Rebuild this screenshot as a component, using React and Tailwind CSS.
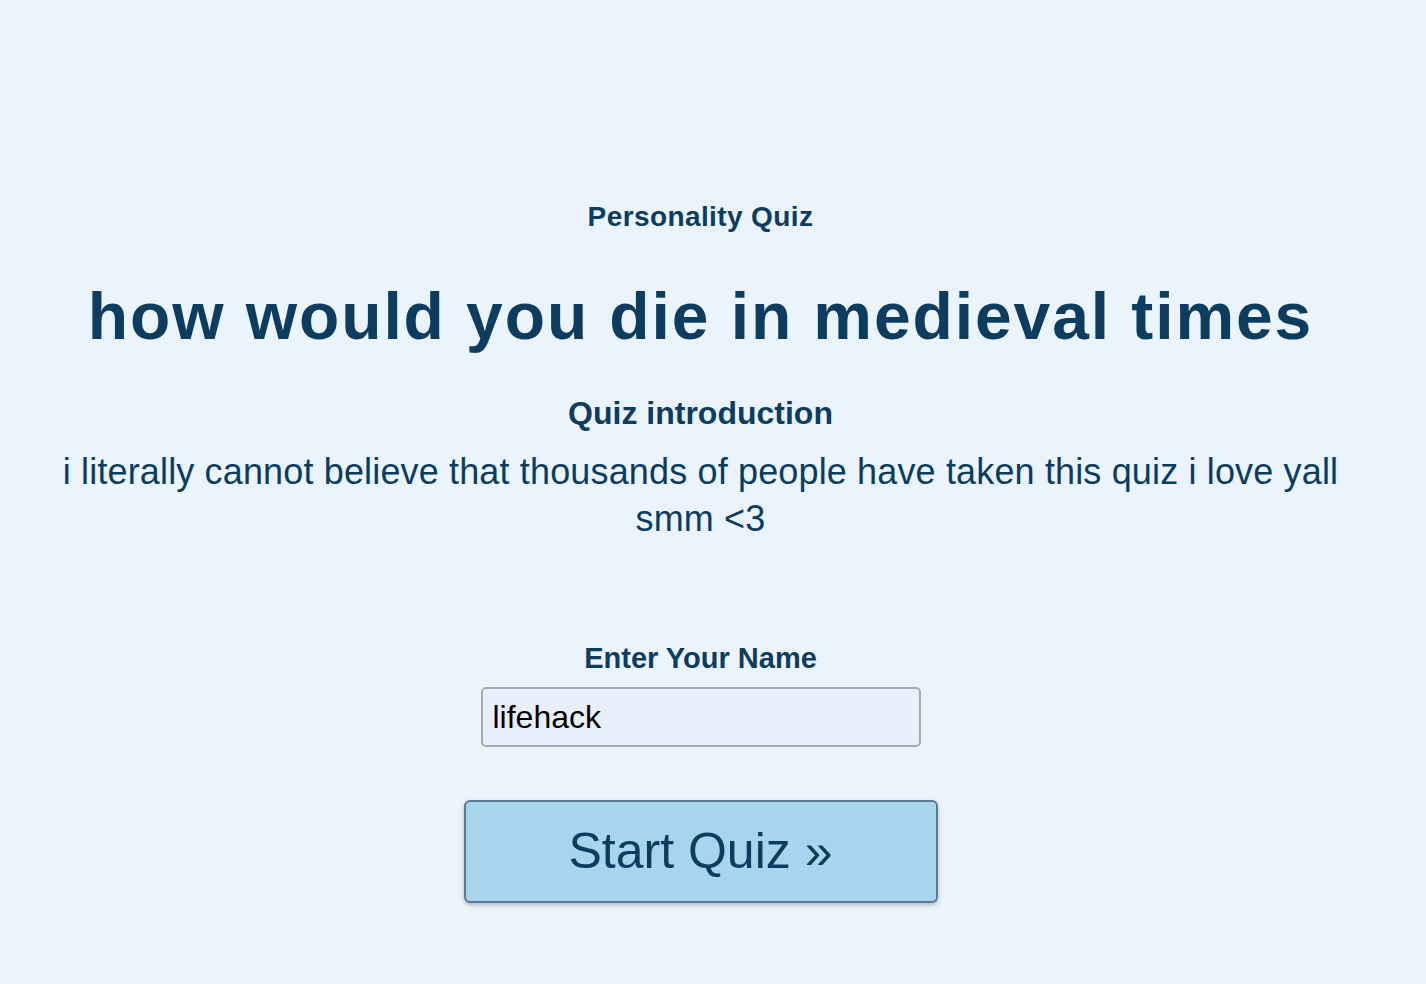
import React, { useState } from 'react';

export default function App() {
  const [name, setName] = useState('lifehack');

  return (
    <div
      className="min-h-screen bg-[#ebf4fc] text-[#0c3c5e] flex flex-col items-center text-center pt-[201px] pr-[25px]"
      style={{ fontFamily: '"Liberation Sans", Arial, sans-serif' }}
    >
      <h2 className="text-[28px] font-bold leading-[32px] tracking-[0.4px]">Personality Quiz</h2>
      <h1 className="mt-[43px] text-[66px] font-bold leading-[80px] tracking-[1.9px]">how would you die in medieval times</h1>
      <h3 className="mt-[37px] text-[32px] font-bold leading-[40px]">Quiz introduction</h3>
      <p className="mt-[15px] px-[40px] text-[36px] leading-[47px] tracking-[0.15px]">
        i literally cannot believe that thousands of people have taken this quiz i love yall smm &lt;3
      </p>

      <label className="mt-[99px] text-[29px] font-bold leading-[34px]">Enter Your Name</label>
      <input
        value={name}
        onChange={e => setName(e.target.value)}
        className="mt-[12px] w-[440px] h-[60px] rounded-[5px] border-2 border-[#a3aab2] bg-[#e8effb] px-[10px] text-[32px] text-black outline-none"
      />

      <button className="mt-[53px] w-[474px] h-[103px] rounded-[6px] border-2 border-[#5b7b93] bg-[#a9d4ed] text-[50px] text-[#0c3c5e] shadow-[0_2px_4px_rgba(0,0,0,0.25)]">
        Start Quiz »
      </button>
    </div>
  );
}
